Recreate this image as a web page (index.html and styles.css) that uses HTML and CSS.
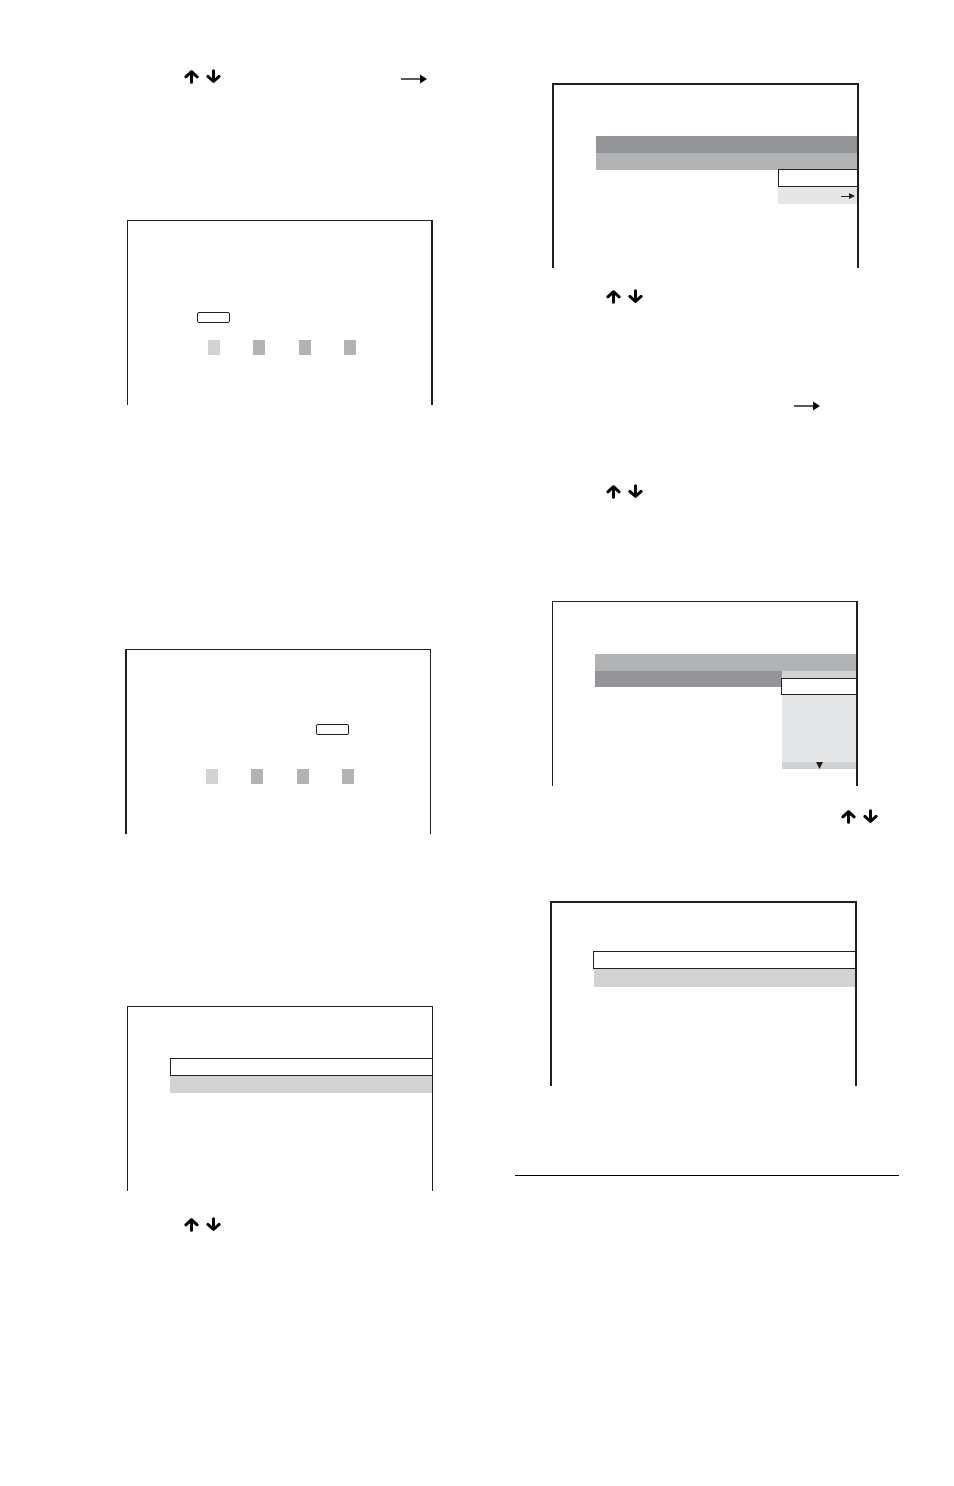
FILE: index.html
```html
<!DOCTYPE html>
<html lang="en">
<head>
  <meta charset="UTF-8">
  <meta name="viewport" content="width=device-width, initial-scale=1">
  <title>Setup screens</title>
  <link rel="stylesheet" href="styles.css">
</head>
<body>
  <!-- Shared arrow icons -->
  <svg class="icon-defs" aria-hidden="true">
    <symbol id="up" viewBox="0 0 15 15">
      <path d="M7.5 3V13.3M1.9 7.8L7.5 2.7L13.1 7.8" fill="none" stroke="#000" stroke-width="3" stroke-linecap="round" stroke-linejoin="round"/>
    </symbol>
    <symbol id="down" viewBox="0 0 15 15">
      <path d="M7.5 1.8V12M1.9 7.4L7.5 12.5L13.1 7.4" fill="none" stroke="#000" stroke-width="3" stroke-linecap="round" stroke-linejoin="round"/>
    </symbol>
    <symbol id="right" viewBox="0 0 26 15">
      <path d="M0 10H20" stroke="#222" stroke-width="1.5"/>
      <path d="M19 5.5L26 10L19 14.5Z"/>
    </symbol>
  </svg>

  <main class="page">
    <div class="column column-left">
      <div class="step">
        <svg class="key"><use href="#up"/></svg>
        <svg class="key"><use href="#down"/></svg>
        <svg class="key-right"><use href="#right"/></svg>
      </div>

      <div class="screen screen-right-edge code-first">
        <div class="code-box"></div>
        <div class="digits">
          <span class="digit current"></span>
          <span class="digit"></span>
          <span class="digit"></span>
          <span class="digit"></span>
        </div>
      </div>

      <div class="screen screen-left-edge screen-out code-second">
        <div class="code-box"></div>
        <div class="digits">
          <span class="digit current"></span>
          <span class="digit"></span>
          <span class="digit"></span>
          <span class="digit"></span>
        </div>
      </div>

      <div class="screen list-first">
        <div class="bar selected"></div>
        <div class="bar light"></div>
      </div>

      <div class="step step-after-list">
        <svg class="key"><use href="#up"/></svg>
        <svg class="key"><use href="#down"/></svg>
      </div>
    </div>

    <div class="column column-right">
      <div class="screen screen-thick">
        <div class="bar dark"></div>
        <div class="bar medium"></div>
        <div class="submenu">
          <div class="bar selected"></div>
          <div class="bar pale">
            <svg class="more" viewBox="0 0 14 8">
              <path d="M0 4.5H9" stroke="#231f20"/>
              <path d="M8 1L14 4L8 7Z" fill="#231f20"/>
            </svg>
          </div>
        </div>
      </div>

      <div class="step step-after-menu">
        <svg class="key"><use href="#up"/></svg>
        <svg class="key"><use href="#down"/></svg>
      </div>

      <div class="step step-enter">
        <svg class="key-right"><use href="#right"/></svg>
      </div>

      <div class="step step-choose">
        <svg class="key"><use href="#up"/></svg>
        <svg class="key"><use href="#down"/></svg>
      </div>

      <div class="screen screen-right-edge dropdown-screen">
        <div class="bar medium"></div>
        <div class="bar-row">
          <div class="bar dark"></div>
          <div class="dropdown">
            <div class="scroll"></div>
            <div class="bar selected"></div>
            <div class="options"></div>
            <div class="scroll">
              <svg class="scroll-down" viewBox="0 0 7 7"><path d="M0 0H7L3.5 7Z" fill="#231f20"/></svg>
            </div>
          </div>
        </div>
      </div>

      <div class="step step-end">
        <svg class="key"><use href="#up"/></svg>
        <svg class="key"><use href="#down"/></svg>
      </div>

      <div class="screen screen-thick screen-out list-last">
        <div class="bar selected"></div>
        <div class="bar light"></div>
      </div>

      <hr class="rule">
    </div>
  </main>
</body>
</html>
```

FILE: styles.css
```css
* {
  margin: 0;
  padding: 0;
  box-sizing: border-box;
}
body {
  font-family: "Liberation Sans", Arial, sans-serif;
  background: #fff;
  color: #000;
  min-height: 100vh;
}
svg {
  display: block;
  flex: none;
}
.icon-defs {
  display: none;
}
.page {
  display: grid;
  grid-template-columns: 1fr 1fr;
  gap: 41px;
  padding: 0 55px 40px 90px;
}
.column {
  display: flex;
  flex-direction: column;
}
.column-left {
  padding-top: 69px;
}
.column-right {
  padding-top: 83px;
}

/* key rows */
.step {
  display: flex;
  gap: 7px;
  padding: 0 47px 0 94px;
}
.column-right .step {
  padding-left: 91px;
}
.key {
  width: 15px;
  height: 15px;
}
.key-right {
  width: 26px;
  height: 15px;
  margin-left: auto;
}
.step-after-list {
  margin-top: 26px;
}
.step-after-menu {
  margin-top: 21px;
}
.step-enter {
  margin-top: 92px;
  padding-right: 79px;
}
.step-choose {
  margin-top: 73px;
}
.step-end {
  justify-content: flex-end;
  margin-top: 23px;
  padding-right: 21px;
}

/* TV screens, open at the bottom */
.screen {
  display: flex;
  flex-direction: column;
  width: calc(100% - 78px);
  height: 185px;
  margin-left: 37px;
  padding: 51px 0 0 42px;
  border: 1px solid #231f20;
  border-bottom: none;
}
.screen-left-edge {
  border-left-width: 2px;
}
.screen-right-edge {
  border-right-width: 2px;
}
.screen-thick {
  width: calc(100% - 77px);
  border-width: 2px;
}
.screen-out {
  margin-left: 35px;
}

/* code entry */
.code-first {
  margin-top: 136px;
  padding: 91px 0 0 69px;
}
.code-second {
  margin-top: 244px;
  padding: 74px 0 0 79px;
}
.code-box {
  width: 33px;
  height: 11px;
  border: 1px solid #231f20;
  border-radius: 2px;
}
.digits {
  display: flex;
  justify-content: space-between;
  width: 148px;
}
.code-first .digits {
  margin: 17px 0 0 11px;
}
.code-second .code-box {
  margin-left: 110px;
}
.code-second .digits {
  margin-top: 34px;
}
.digit {
  width: 12px;
  height: 15px;
  background: #b1b3b5;
}
.digit.current {
  background: #d1d2d4;
}

/* menu bars */
.bar {
  height: 17px;
}
.dark {
  background: #939498;
}
.medium {
  background: #b1b3b5;
}
.light {
  background: #d1d2d4;
}
.pale {
  background: #e5e6e8;
}
.selected {
  height: 18px;
  background: #fff;
  border: 1px solid #231f20;
  border-right: none;
}
.list-first {
  margin-top: 172px;
}
.list-last {
  margin-top: 77px;
  padding-top: 48px;
}
.list-last .selected {
  margin-left: -1px;
}
.list-last .light {
  height: 18px;
}
.submenu {
  width: 79px;
  margin-top: -1px;
  align-self: flex-end;
}
.submenu .pale {
  display: flex;
  justify-content: flex-end;
  align-items: center;
  padding-right: 2px;
}
.more {
  width: 14px;
  height: 8px;
}

/* drop-down list */
.dropdown-screen {
  margin-top: 102px;
  padding-top: 52px;
}
.bar-row {
  display: flex;
  align-items: flex-start;
}
.bar-row .bar {
  height: 16px;
}
.bar-row .dark {
  flex: 1;
}
.dropdown {
  width: 74px;
}
.dropdown .selected {
  height: 17px;
  margin-left: -1px;
}
.scroll {
  display: flex;
  justify-content: center;
  height: 7px;
  background: #d1d2d4;
}
.scroll-down {
  width: 7px;
  height: 7px;
}
.options {
  height: 67px;
  background: #e5e6e8;
}

.rule {
  margin-top: 89px;
  border: none;
  border-top: 1px solid #000;
}
```
